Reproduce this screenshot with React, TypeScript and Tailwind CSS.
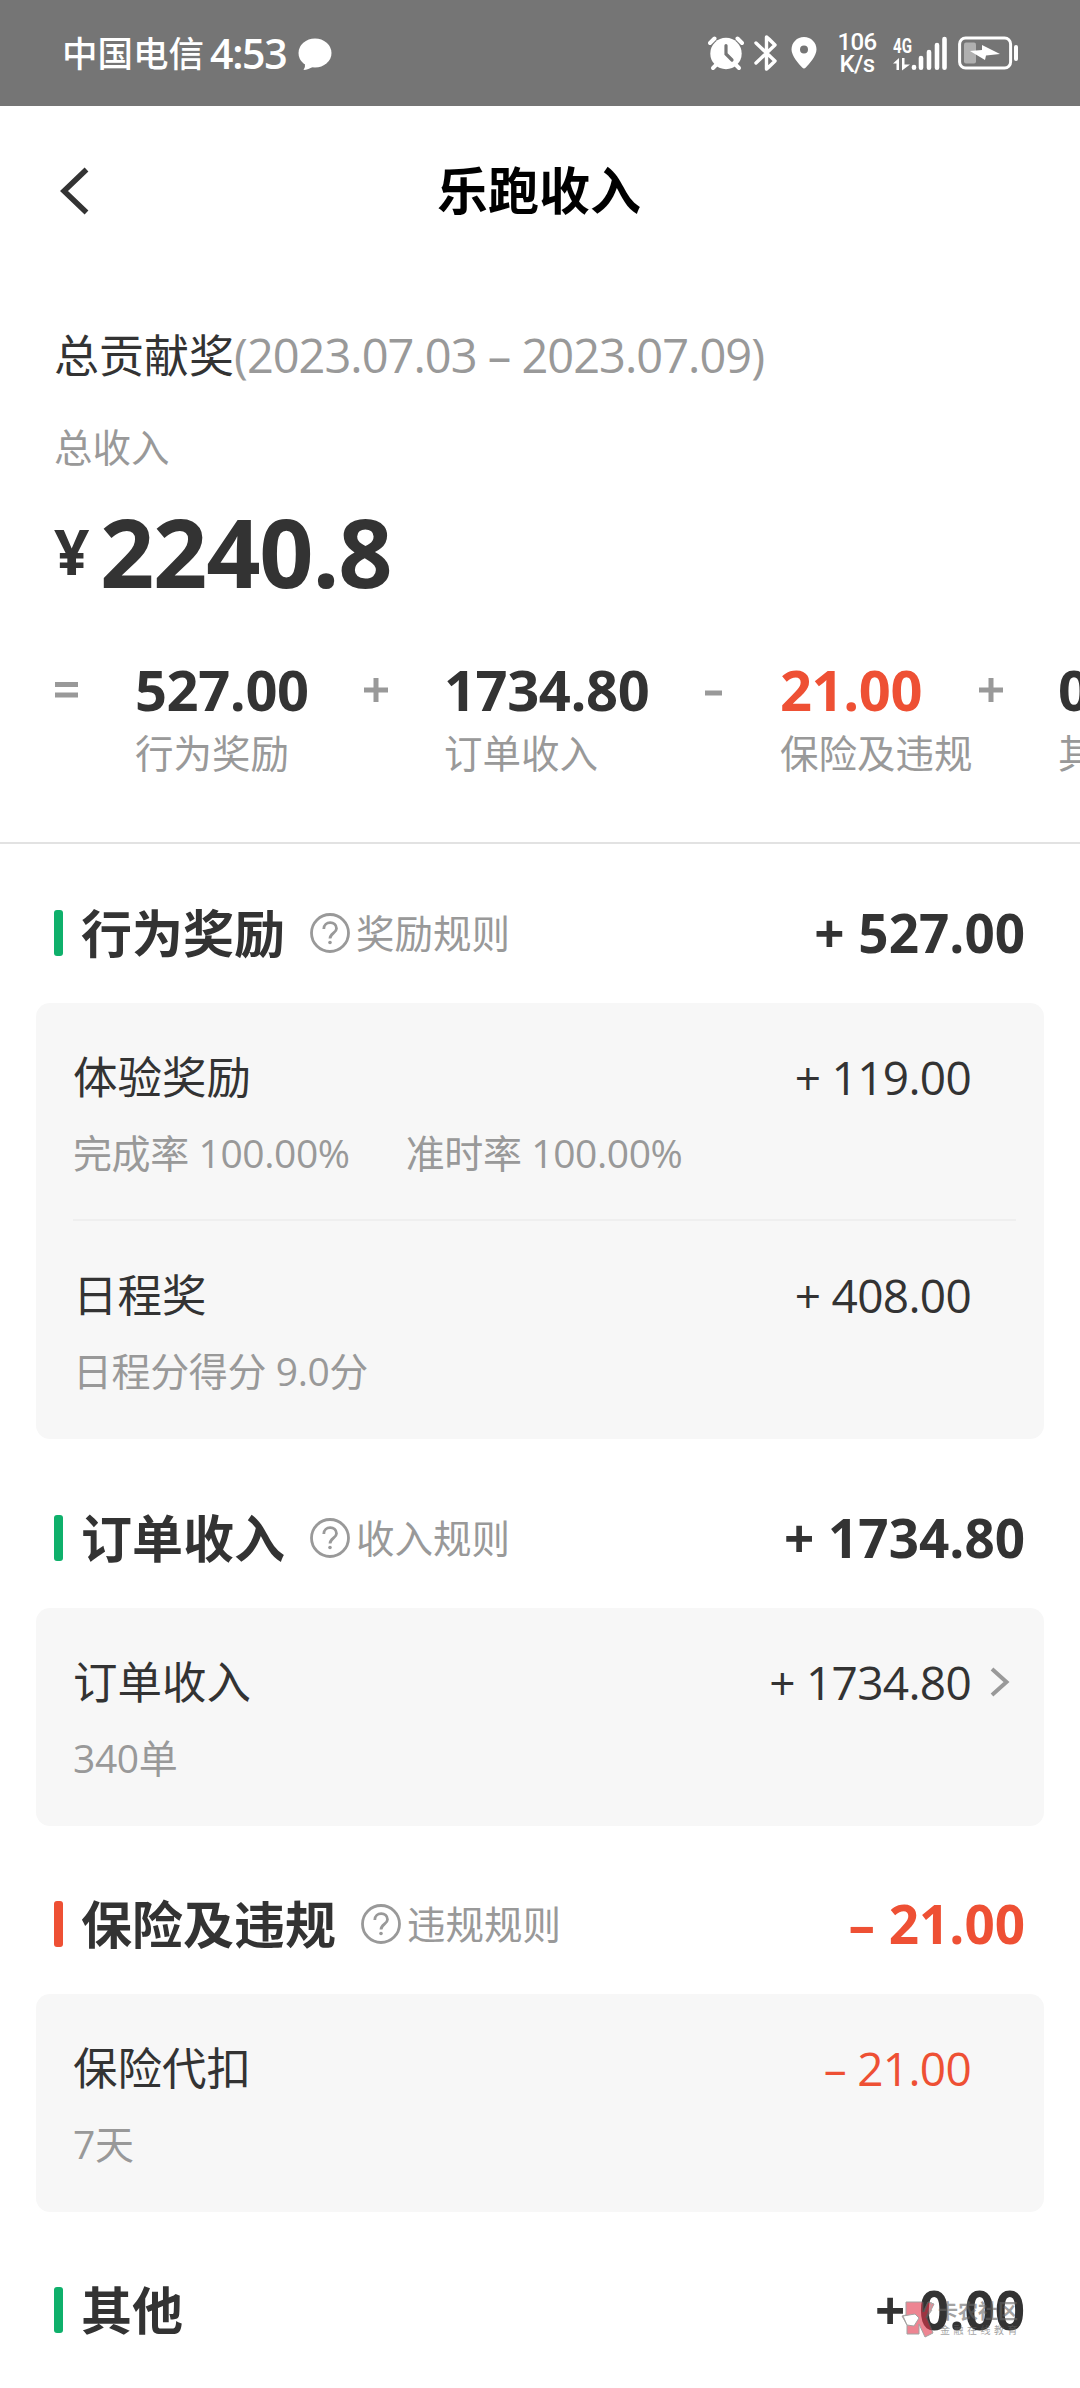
import React from "react";

const CJK = "font-['Noto_Sans_CJK_SC',sans-serif] -translate-y-[2px]";
const NUM = "font-['Open_Sans','Noto_Sans_CJK_SC',sans-serif]";

function StatusBar() {
  return (
    <header className="flex h-[106px] shrink-0 items-center bg-[#757575] pl-[62px] text-white">
      <span className="-translate-y-[1px] font-['Noto_Sans_CJK_SC',sans-serif] text-[35.500px] leading-[52px] font-medium">中国电信</span>
      <span className="ml-[6px] w-[80px] font-['Open_Sans',sans-serif] text-[41px] leading-[52px] font-semibold tracking-[-1.300px]">4:53</span>
      <svg className="mt-[3px] ml-[8px]" width="34" height="34" viewBox="0 0 34 34" fill="#fff">
        <ellipse cx="17" cy="15" rx="16.500" ry="14.500" />
        <path d="M7 25 Q7.500 29 5.500 32 Q10 32 16 28 Z" />
      </svg>
      <div className="ml-auto flex h-full items-center pr-[60px]">
        <svg width="36" height="36" viewBox="0 0 36 36" fill="none" stroke="#fff" strokeLinecap="round">
          <circle cx="18" cy="18.500" r="15.700" fill="#fff" stroke="none" />
          <path d="M2 8 L6.500 3.500 M29.500 3.500 L34 8" strokeWidth="4" />
          <path d="M8 30 L5 33 M28 30 L31 33" strokeWidth="4" />
          <path d="M18 10.500 V19 L24 25" stroke="#757575" strokeWidth="3.200" />
        </svg>
        <svg className="ml-[10px]" width="24" height="38" viewBox="0 0 24 38" fill="none" stroke="#fff" strokeWidth="3.400" strokeLinejoin="round" strokeLinecap="round">
          <path d="M2 9 L21 27 Q14 34 12.500 35 V3 Q14 4 21 11 L2 29" />
        </svg>
        <svg className="ml-[13px]" width="26" height="34" viewBox="0 0 26 34">
          <path fillRule="evenodd" fill="#fff" d="M13 1 C20 1 25.500 6.500 25.500 13.500 C25.500 20 18 28 14.800 31.500 Q13 33.400 11.200 31.500 C8 28 .5 20 .5 13.500 C.5 6.500 6 1 13 1 Z M13 9.500 a4 4 0 1 0 0 8 a4 4 0 1 0 0 -8 Z" />
        </svg>
        <div className="ml-[19px] flex w-[42px] flex-col items-center font-['Roboto',sans-serif] text-[24px] leading-[22px]">
          <span className="font-medium tracking-[-0.600px]">106</span>
          <span className="font-medium tracking-[-0.600px]">K/s</span>
        </div>
        <div className="ml-[15px] flex h-[36px] w-[56px] items-end">
          <div className="flex w-[18px] flex-col">
            <span className="origin-left scale-x-[0.72] font-['Roboto',sans-serif] text-[21px] leading-[19px] font-bold">4G</span>
            <svg className="mt-[2px]" width="18" height="13" viewBox="0 0 18 13" fill="#fff">
              <path d="M0 5.500 L6 0 V12 H3.500 V5.500 Z M9 0 H11.500 V6.500 H17 L9 12.500 Z" />
            </svg>
          </div>
          <svg width="37" height="36" viewBox="0 0 37 36" stroke="#fff" strokeWidth="4.600" strokeLinecap="round">
            <path d="M3 32.700 V32 M10 32.700 V23 M18 32.700 V17 M26 32.700 V10 M33.500 32.700 V4" />
          </svg>
        </div>
        <svg className="ml-[9px]" width="62" height="34" viewBox="0 0 62 34">
          <rect x="1.600" y="2" width="51" height="30" rx="6" fill="none" stroke="#fff" strokeWidth="3" />
          <rect x="6" y="6.500" width="12" height="21" rx="2" fill="#b0b0b0" />
          <path d="M12 15 L24 14 V9 L42 18 L28 19.500 L27 24 Z" fill="#fff" />
          <rect x="56" y="9" width="4" height="16" rx="2" fill="#fff" />
        </svg>
      </div>
    </header>
  );
}

function NavBar() {
  return (
    <nav className="relative flex h-[170px] shrink-0 items-center justify-center">
      <svg className="absolute top-[60px] left-[58px]" width="34" height="50" viewBox="0 0 34 50" fill="none" stroke="#333" strokeWidth="5.500">
        <path d="M28.500 3.500 L6 25 L28.500 46.500" />
      </svg>
      <h1 className="-translate-x-[1px] -translate-y-[3px] font-['Noto_Sans_CJK_SC',sans-serif] text-[51px] leading-[60px] font-bold text-black">乐跑收入</h1>
    </nav>
  );
}

function Term({ value, label, className = "", valueClass = "" }: { value: string; label: string; className?: string; valueClass?: string }) {
  return (
    <div className={`flex shrink-0 flex-col ${className}`}>
      <span className={`${NUM} -translate-y-[1px] text-[56px] leading-[66px] font-bold tracking-[-0.400px] ${valueClass}`}>{value}</span>
      <span className={`${CJK} text-[38.500px] leading-[60px] whitespace-nowrap text-[#999]`}>{label}</span>
    </div>
  );
}

function Operator({ sign, className }: { sign: string; className: string }) {
  return (
    <svg className={`mt-[21px] shrink-0 ${className}`} width="24" height="24" viewBox="0 0 24 24" stroke="#999" strokeWidth="5">
      {sign === "=" && <path d="M1 6.500 H24 M1 17 H24" />}
      {sign === "+" && <path d="M0 12 H24 M12 0 V24" />}
      {sign === "-" && <path d="M3 15 H20" />}
    </svg>
  );
}

function Summary() {
  return (
    <section className="flex h-[568px] shrink-0 flex-col overflow-hidden border-b-2 border-[#e2e2e2] pl-[54px]">
      <div className="mt-[50px] flex h-[60px] items-center whitespace-nowrap">
        <span className={`${CJK} text-[45px] leading-[60px] text-[#333]`}>总贡献奖</span>
        <span className={`${NUM} -translate-y-[1px] text-[47px] leading-[60px] tracking-[-1px] text-[#999]`}>(2023.07.03 – 2023.07.09)</span>
      </div>
      <div className={`${CJK} mt-[33px] text-[38.500px] leading-[56px] text-[#999]`}>总收入</div>
      <div className={`${NUM} mt-[26px] flex h-[104px] -translate-y-[2px] items-center font-bold text-[#333]`}>
        <span className="w-[46px] text-[62px] leading-[104px]">¥</span>
        <span className="text-[95px] leading-[104px] tracking-[-1.200px]">2240.8</span>
      </div>
      <div className="mt-[52px] flex text-[#333]">
        <Operator sign="=" className="" />
        <Term value="527.00" label="行为奖励" className="ml-[57px] w-[174px]" />
        <Operator sign="+" className="ml-[55px]" />
        <Term value="1734.80" label="订单收入" className="ml-[56px] w-[206px]" />
        <Operator sign="-" className="ml-[52px]" />
        <Term value="21.00" label="保险及违规" className="ml-[54px] w-[194px]" valueClass="text-[#ee5034]" />
        <Operator sign="+" className="ml-[5px]" />
        <Term value="0.00" label="其他" className="ml-[55px]" />
      </div>
    </section>
  );
}

function SectionHeader({ title, rule, amount, negative, className = "" }: { title: string; rule?: string; amount: string; negative?: boolean; className?: string }) {
  return (
    <div className={`flex shrink-0 items-center pr-[55px] pl-[54px] ${className}`}>
      <span className={`h-[46px] w-[9px] rounded-[3px] ${negative ? "bg-[#ee5034]" : "bg-[#0fb06b]"}`} />
      <h2 className={`${CJK} ml-[18px] text-[51px] leading-[60px] font-bold text-[#333]`}>{title}</h2>
      {rule && (
        <div className="ml-[24px] flex items-center">
          <svg width="42" height="42" viewBox="0 0 42 42" fill="none" stroke="#999" strokeWidth="2.800">
            <circle cx="21" cy="21" r="18.500" />
            <path d="M14.800 17 C14.800 8.500 27.500 8.500 27.500 16.500 C27.500 21 21 21.500 21 26.500" />
            <circle cx="21" cy="30.500" r="1.800" fill="#999" stroke="none" />
          </svg>
          <span className={`${CJK} ml-[5px] text-[38.500px] leading-[56px] text-[#999]`}>{rule}</span>
        </div>
      )}
      <span className={`${NUM} ml-auto text-[53px] leading-[60px] font-bold ${negative ? "text-[#ee5034]" : "text-[#333]"}`}>{amount}</span>
    </div>
  );
}

function Row({ title, amount, notes, negative, link }: { title: string; amount: string; notes: string[]; negative?: boolean; link?: boolean }) {
  return (
    <div className="flex h-[218px] flex-col">
      <div className="mt-[44px] flex h-[60px] items-center">
        <span className={`${CJK} text-[44.500px] leading-[60px] text-[#333]`}>{title}</span>
        <span className={`${NUM} ml-auto text-[46px] leading-[60px] tracking-[-0.700px] ${negative ? "text-[#ee5034]" : "text-[#333]"}`}>{amount}</span>
        <span className="flex w-[45px] justify-end pr-[6px]">
          {link && (
            <svg width="20" height="30" viewBox="0 0 20 30" fill="none" stroke="#999" strokeWidth="4">
              <path d="M2 2 L16.500 15 L2 28" />
            </svg>
          )}
        </span>
      </div>
      <div className={`${NUM} mt-[18px] flex h-[56px] gap-[56px] text-[39px] leading-[56px] tracking-[-0.400px] text-[#999]`}>
        {notes.map((note) => (
          <span key={note}>{note}</span>
        ))}
      </div>
    </div>
  );
}

function Card({ children }: { children: React.ReactNode }) {
  return <div className="mx-[36px] shrink-0 divide-y-2 divide-[#efefef] rounded-[14px] bg-[#f7f7f7] pr-[28px] pl-[37px]">{children}</div>;
}

function Watermark() {
  return (
    <div className="absolute top-[2300px] left-[901px] flex opacity-60">
      <svg width="34" height="38" viewBox="0 0 34 38">
        <path d="M5 2 H22 V12 L27 2 L33 4 L26 18 L32 33 L24 37 L18 24 V34 H6 V25 L1 16 L5 15 Z" fill="#e2354b" stroke="#666" strokeWidth="1" />
        <path d="M2 16 L14 14 L18 18 L13 26 L6 25 Z" fill="#fff" stroke="#666" strokeWidth="1" />
        <path d="M23 12 L27 2 L31 3 L25 18 L31 10" fill="none" stroke="#777" strokeWidth="1" />
      </svg>
      <div className="ml-[3px] flex flex-col font-['Noto_Sans_CJK_SC',sans-serif] whitespace-nowrap text-[#666]">
        <span className="text-[20px] leading-[22px] font-bold">卡农社区</span>
        <span className="mt-[1px] ml-[2px] text-[10px] leading-[13px] tracking-[3.500px]">金融在线教育</span>
      </div>
    </div>
  );
}

export default function App() {
  return (
    <div className="relative flex h-[2388px] w-[1080px] flex-col overflow-hidden bg-white">
      <StatusBar />
      <NavBar />
      <Summary />
      <SectionHeader className="h-[159px] pt-[19px]" title="行为奖励" rule="奖励规则" amount="+ 527.00" />
      <Card>
        <Row title="体验奖励" amount="+ 119.00" notes={["完成率 100.00%", "准时率 100.00%"]} />
        <Row title="日程奖" amount="+ 408.00" notes={["日程分得分 9.0分"]} />
      </Card>
      <SectionHeader className="h-[169px] pt-[28px]" title="订单收入" rule="收入规则" amount="+ 1734.80" />
      <Card>
        <Row title="订单收入" amount="+ 1734.80" notes={["340单"]} link />
      </Card>
      <SectionHeader className="h-[168px] pt-[27px]" title="保险及违规" rule="违规规则" amount="– 21.00" negative />
      <Card>
        <Row title="保险代扣" amount="– 21.00" notes={["7天"]} negative />
      </Card>
      <SectionHeader className="h-[168px] pt-[27px]" title="其他" amount="+ 0.00" />
      <Watermark />
    </div>
  );
}
